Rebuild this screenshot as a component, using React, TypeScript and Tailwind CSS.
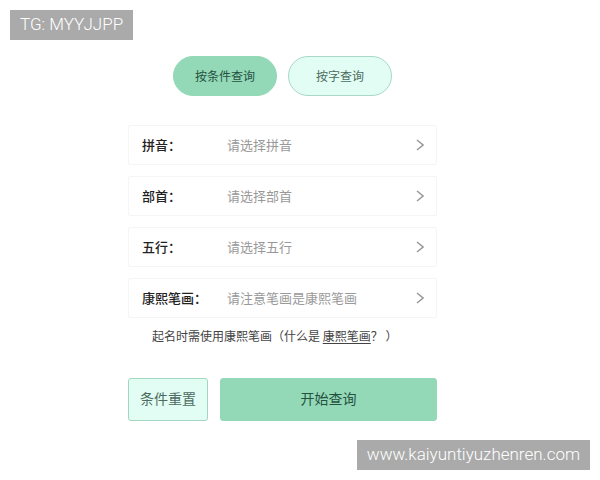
import { useState } from "react";

interface Field {
  id: string;
  label: string;
  placeholder: string;
  options: string[];
}

const fields: Field[] = [
  { id: "pinyin", label: "拼音：", placeholder: "请选择拼音", options: [] },
  { id: "radical", label: "部首：", placeholder: "请选择部首", options: [] },
  { id: "element", label: "五行：", placeholder: "请选择五行", options: [] },
  { id: "strokes", label: "康熙笔画：", placeholder: "请注意笔画是康熙笔画", options: [] },
];

const tabs = ["按条件查询", "按字查询"];

const SelectRow = ({ field }: { field: Field }) => (
  <div className="relative flex h-10 items-center rounded-xs border border-[#f5f5f5] bg-white pl-[13px] text-[13px] leading-5">
    <label htmlFor={field.id} className="w-[85px] shrink-0 font-medium text-[#222]">
      {field.label}
    </label>
    <select
      id={field.id}
      className="h-full min-w-0 flex-1 appearance-none bg-transparent pr-8 text-[#999] outline-none"
    >
      <option value="">{field.placeholder}</option>
      {field.options.map((option) => (
        <option key={option}>{option}</option>
      ))}
    </select>
    <svg
      className="pointer-events-none absolute right-3 h-3 w-2"
      viewBox="0 0 8 12"
      fill="none"
      stroke="#999"
      strokeWidth="1.5"
      aria-hidden="true"
    >
      <path d="M1 1l6 5-6 5" />
    </svg>
  </div>
);

const App = () => {
  const [active, setActive] = useState(0);

  return (
    <div className="relative min-h-screen bg-white pt-14 font-['Noto_Sans_CJK_SC',sans-serif]">
      <p className="absolute top-[10px] left-[10px] flex h-[30px] items-center bg-[#aaa] px-[10px] font-['Roboto',sans-serif] text-[17px] font-light text-white">
        TG: MYYJJPP
      </p>

      <main className="mr-[163px] ml-32">
        {/* Tabs */}
        <div className="flex justify-center gap-[11px]">
          {tabs.map((tab, index) => (
            <button
              key={tab}
              type="button"
              onClick={() => setActive(index)}
              className={`h-10 w-[104px] rounded-full border text-xs ${
                active === index
                  ? "border-[#93d9b8] bg-[#93d9b8] text-[#26513f]"
                  : "border-[#a9d8c6] bg-[#e2fef4] text-[#4d6b60]"
              }`}
            >
              {tab}
            </button>
          ))}
        </div>

        <form onSubmit={(e) => e.preventDefault()}>
          <div className="mt-[29px] flex flex-col gap-[11px]">
            {fields.map((field) => (
              <SelectRow key={field.id} field={field} />
            ))}
          </div>

          <p className="mt-2 pl-6 text-xs leading-5 text-[#444]">
            起名时需使用康熙笔画（什么是{" "}
            <a href="#strokes" className="underline underline-offset-2">
              康熙笔画
            </a>
            ？ ）
          </p>

          {/* Actions */}
          <div className="mt-8 flex gap-3 text-sm">
            <button
              type="reset"
              className="h-[43px] w-20 rounded-[3px] border border-[#a3d6c1] bg-[#e2fef4] pb-1 text-[#4d6b60]"
            >
              条件重置
            </button>
            <button
              type="submit"
              className="h-[43px] flex-1 rounded-[3px] border border-[#93d9b8] bg-[#93d9b8] pb-1 text-[#26513f]"
            >
              开始查询
            </button>
          </div>
        </form>
      </main>

      <p className="absolute right-[10px] bottom-[10px] flex h-[30px] items-center bg-[#aaa] px-[10px] font-['Roboto',sans-serif] text-[17px] font-light text-white">
        www.kaiyuntiyuzhenren.com
      </p>
    </div>
  );
};

export default App;
